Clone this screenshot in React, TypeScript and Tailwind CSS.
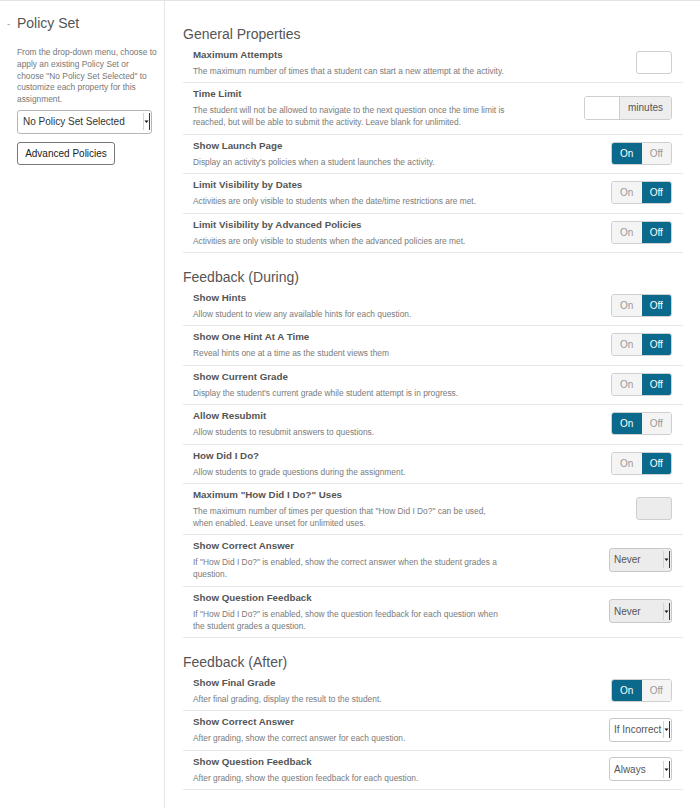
import React from 'react'

type Control =
  | { kind: 'toggle'; on: boolean }
  | { kind: 'number'; disabled?: boolean }
  | { kind: 'minutes' }
  | { kind: 'select'; value: string; disabled?: boolean }

type Row = { title: string; desc: string; control: Control }

const SECTIONS: { heading: string; rows: Row[] }[] = [
  {
    heading: 'General Properties',
    rows: [
      { title: 'Maximum Attempts', desc: 'The maximum number of times that a student can start a new attempt at the activity.', control: { kind: 'number' } },
      { title: 'Time Limit', desc: 'The student will not be allowed to navigate to the next question once the time limit is reached, but will be able to submit the activity. Leave blank for unlimited.', control: { kind: 'minutes' } },
      { title: 'Show Launch Page', desc: "Display an activity's policies when a student launches the activity.", control: { kind: 'toggle', on: true } },
      { title: 'Limit Visibility by Dates', desc: 'Activities are only visible to students when the date/time restrictions are met.', control: { kind: 'toggle', on: false } },
      { title: 'Limit Visibility by Advanced Policies', desc: 'Activities are only visible to students when the advanced policies are met.', control: { kind: 'toggle', on: false } },
    ],
  },
  {
    heading: 'Feedback (During)',
    rows: [
      { title: 'Show Hints', desc: 'Allow student to view any available hints for each question.', control: { kind: 'toggle', on: false } },
      { title: 'Show One Hint At A Time', desc: 'Reveal hints one at a time as the student views them', control: { kind: 'toggle', on: false } },
      { title: 'Show Current Grade', desc: "Display the student's current grade while student attempt is in progress.", control: { kind: 'toggle', on: false } },
      { title: 'Allow Resubmit', desc: 'Allow students to resubmit answers to questions.', control: { kind: 'toggle', on: true } },
      { title: 'How Did I Do?', desc: 'Allow students to grade questions during the assignment.', control: { kind: 'toggle', on: false } },
      { title: 'Maximum "How Did I Do?" Uses', desc: 'The maximum number of times per question that "How Did I Do?" can be used, when enabled. Leave unset for unlimited uses.', control: { kind: 'number', disabled: true } },
      { title: 'Show Correct Answer', desc: 'If "How Did I Do?" is enabled, show the correct answer when the student grades a question.', control: { kind: 'select', value: 'Never', disabled: true } },
      { title: 'Show Question Feedback', desc: 'If "How Did I Do?" is enabled, show the question feedback for each question when the student grades a question.', control: { kind: 'select', value: 'Never', disabled: true } },
    ],
  },
  {
    heading: 'Feedback (After)',
    rows: [
      { title: 'Show Final Grade', desc: 'After final grading, display the result to the student.', control: { kind: 'toggle', on: true } },
      { title: 'Show Correct Answer', desc: 'After grading, show the correct answer for each question.', control: { kind: 'select', value: 'If Incorrect' } },
      { title: 'Show Question Feedback', desc: 'After grading, show the question feedback for each question.', control: { kind: 'select', value: 'Always' } },
    ],
  },
]

function SelectArrow() {
  return (
    <svg width="7" height="17" viewBox="0 0 7 17" className="shrink-0 mr-[1px]">
      <line x1="0.5" y1="0" x2="0.5" y2="17" stroke="#d4d4d4" />
      <line x1="6.5" y1="0" x2="6.5" y2="17" stroke="#333" />
      <path d="M1.5 7.5 L5.5 7.5 L3.5 10 Z" fill="#111" />
    </svg>
  )
}

function SelectBox({ value, disabled, width }: { value: string; disabled?: boolean; width: string }) {
  return (
    <div
      className={`flex items-center h-[24px] rounded-[3px] border border-[#c8c8c8] pl-[4px] ${width} ${
        disabled ? 'bg-[#ececec]' : 'bg-white'
      }`}
    >
      <span className="flex-1 truncate text-[10px] text-[#555]">{value}</span>
      <SelectArrow />
    </div>
  )
}

function Toggle({ on }: { on: boolean }) {
  return (
    <div className="flex h-[23px] w-[61px] rounded-[3px] border border-[#cfcfcf] overflow-hidden text-[10px]">
      <div className={`flex-1 flex items-center justify-center ${on ? 'bg-[#0b6a8b] text-white' : 'bg-[#f4f4f4] text-[#999]'}`}>On</div>
      <div className={`flex-1 flex items-center justify-center ${!on ? 'bg-[#0b6a8b] text-white' : 'bg-[#f4f4f4] text-[#999]'}`}>Off</div>
    </div>
  )
}

function ControlView({ control }: { control: Control }) {
  switch (control.kind) {
    case 'toggle':
      return <Toggle on={control.on} />
    case 'number':
      return (
        <div
          className={`h-[23px] w-[36px] rounded-[3px] border border-[#cfcfcf] ${control.disabled ? 'bg-[#ececec]' : 'bg-white'}`}
        />
      )
    case 'minutes':
      return (
        <div className="flex h-[24px] rounded-[3px] border border-[#cfcfcf] overflow-hidden">
          <div className="w-[35px] bg-white border-r border-[#cfcfcf]" />
          <div className="w-[51px] bg-[#eeeeee] flex items-center justify-center text-[10px] text-[#555]">minutes</div>
        </div>
      )
    case 'select':
      return <SelectBox value={control.value} disabled={control.disabled} width="w-[63px]" />
  }
}

export default function App() {
  return (
    <div
      className="flex w-[700px] min-h-[808px] bg-white border-t border-[#e4e4e4]"
      style={{ fontFamily: '"Liberation Sans", Arial, sans-serif' }}
    >
      {/* Sidebar */}
      <aside className="w-[165px] shrink-0 border-r border-[#e6e6e6] pl-[17px] pr-[6px] pt-[12px]">
        <div className="flex items-center h-[20px]">
          <span className="-ml-[10px] w-[10px] text-[10px] text-[#aaa]">-</span>
          <h2 className="text-[14px] text-[#555]">Policy Set</h2>
        </div>
        <p className="mt-[14px] text-[8.4px] leading-[11.8px] text-[#777]">
          From the drop-down menu, choose to apply an existing Policy Set or choose "No Policy Set Selected" to customize each
          property for this assignment.
        </p>
        <div className="mt-[4px] flex items-center h-[24px] w-[135px] rounded-[3px] border border-[#b5b5b5] bg-white pl-[5px]">
          <span className="flex-1 truncate text-[10px] text-[#333]">No Policy Set Selected</span>
          <SelectArrow />
        </div>
        <button className="mt-[8px] h-[23px] w-[98px] rounded-[3px] border border-[#777] bg-white text-[10px] text-[#222]">
          Advanced Policies
        </button>
      </aside>

      {/* Main */}
      <main className="flex-1 pl-[18px] pr-[17px] pb-[20px]">
        {SECTIONS.map((section, si) => (
          <section key={section.heading} className={si === 0 ? 'mt-[23px]' : 'mt-[14px]'}>
            <h3 className="text-[14px] leading-[20px] text-[#555]">{section.heading}</h3>
            {section.rows.map((row) => (
              <div
                key={section.heading + row.title}
                className="flex items-center border-b border-[#e8e8e8] pl-[10px] pr-[11px] pt-[4px] pb-[5.4px]"
              >
                <div className="flex-1">
                  <div className="text-[9.75px] leading-[14px] font-bold text-[#555]">{row.title}</div>
                  <div className="mt-[3px] max-w-[315px] text-[8.4px] leading-[12px] text-[#7a7a7a]">{row.desc}</div>
                </div>
                <ControlView control={row.control} />
              </div>
            ))}
          </section>
        ))}
      </main>
    </div>
  )
}
